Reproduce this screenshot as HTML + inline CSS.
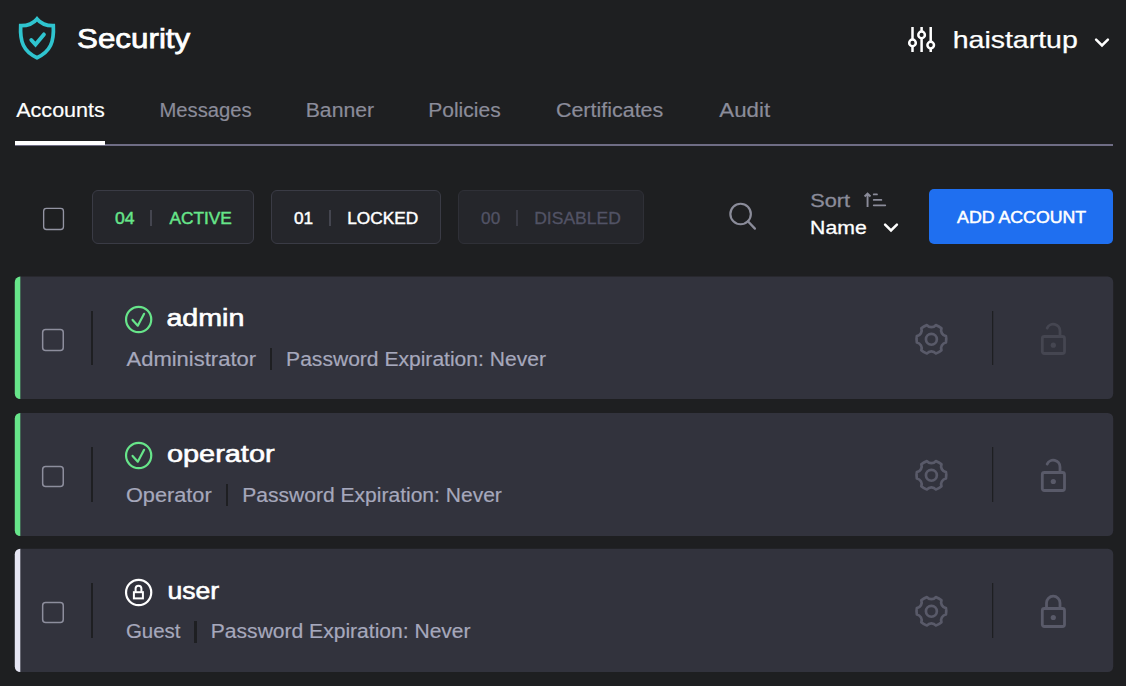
<!DOCTYPE html>
<html>
<head>
<meta charset="utf-8">
<title>Security</title>
<style>
*{box-sizing:border-box;margin:0;padding:0}
html,body{width:1126px;height:686px;overflow:hidden;background:#1e1f21}
body{font-family:"Liberation Sans",sans-serif;color:#fff;position:relative}
.t{position:absolute;white-space:nowrap;line-height:1;transform-origin:0 0}
.abs{position:absolute}
/* header */
/* tabs */
#tabline{left:15px;top:144px;width:1098px;height:2px;background:#6f6d85}
#tabsel{left:15px;top:141px;width:90px;height:4px;background:#fff}
/* toolbar */
.pill{position:absolute;top:190px;height:54px;border:1px solid #3a3b45;border-radius:6px;background:#25262b}
.psep{position:absolute;top:210px;width:1.5px;height:16px;background:#44454f}
#btn{left:929px;top:189px;width:184px;height:55px;border-radius:5px;background:#1f6ff0}
/* rows */
.vsep{position:absolute;width:2px;background:#1e1f22}
</style>
</head>
<body>

<!-- header -->
<svg class="abs" style="left:17px;top:14px" width="40" height="48" viewBox="0 0 40 48">
 <path d="M20 5 C16.500 9.300 10 11.800 3.700 11.700 C2.800 27.500 6.300 37.500 20 43.700 C33.700 37.500 37.200 27.500 36.300 11.700 C30 11.800 23.500 9.300 20 5 Z" fill="none" stroke="#2fc4cf" stroke-width="3.700" stroke-linejoin="miter"/>
 <path d="M14.300 26 L18.500 30.600 L26.900 20.400" fill="none" stroke="#2fc4cf" stroke-width="3.900" stroke-linecap="round" stroke-linejoin="miter"/>
</svg>

<svg class="abs" style="left:906px;top:25px" width="32" height="30" viewBox="0 0 32 30">
 <g fill="none" stroke="#fff" stroke-width="2.500">
  <path d="M6.500 2 V14.600 M6.500 21.200 V27"/>
  <circle cx="6.500" cy="17.900" r="3.300"/>
  <path d="M15.600 2 V6.600 M15.600 13.200 V27"/>
  <circle cx="15.600" cy="9.900" r="3.300"/>
  <path d="M24.700 2 V16.800 M24.700 23.400 V27"/>
  <circle cx="24.700" cy="20.100" r="3.300"/>
 </g>
</svg>
<svg class="abs" style="left:1092px;top:35px" width="20" height="14" viewBox="0 0 20 14">
 <path d="M4.100 4.600 L10 10.500 L15.900 4.600" fill="none" stroke="#fff" stroke-width="2.500" stroke-linecap="round"/>
</svg>

<!-- tabs -->
<div class="abs" id="tabline"></div>
<div class="abs" id="tabsel"></div>

<!-- toolbar -->
<svg class="abs" style="left:42px;top:207px" width="24" height="25"><rect x="1.650" y="1.350" width="19.800" height="21.100" rx="2.800" fill="none" stroke="#9394a3" stroke-width="1.350"/></svg>

<div class="pill" style="left:92px;width:162px"></div>
<div class="psep" style="left:150px"></div>

<div class="pill" style="left:271px;width:170px"></div>
<div class="psep" style="left:329px"></div>

<div class="pill" style="left:458px;width:186px;border-color:#2f3037"></div>
<div class="psep" style="left:516px;background:#3a3b45"></div>

<svg class="abs" style="left:726px;top:200px" width="34" height="34" viewBox="0 0 34 34">
 <circle cx="14.600" cy="14" r="10.250" fill="none" stroke="#8b8c9a" stroke-width="2.200"/>
 <path d="M21.900 21.300 L28.900 28.600" stroke="#8b8c9a" stroke-width="2.300" stroke-linecap="round"/>
</svg>

<svg class="abs" style="left:862px;top:190px" width="28" height="20" viewBox="0 0 28 20">
 <g fill="none" stroke="#8b8c9a" stroke-width="1.900">
  <path d="M5.550 17 V4.200 M2.600 6.500 L5.550 3.550 L8.500 6.500" stroke-linejoin="miter"/>
  <path d="M11.700 4.400 H15 M11.700 9.900 H19.400 M11.700 15.300 H23.300" stroke-width="1.700" stroke-linecap="round"/>
 </g>
</svg>
<svg class="abs" style="left:881px;top:220px" width="20" height="14" viewBox="0 0 20 14">
 <path d="M4.100 4.600 L10 10.500 L15.900 4.600" fill="none" stroke="#fff" stroke-width="2.500" stroke-linecap="round"/>
</svg>

<div class="abs" id="btn"></div>

<!-- ROWS -->
<svg class="abs" style="left:0;top:0" width="1126" height="686" viewBox="0 0 1126 686">
 <defs>
  <clipPath id="rc0"><rect x="14.800" y="276.6" width="1098.400" height="122.5" rx="5.500"/></clipPath>
  <clipPath id="rc1"><rect x="14.800" y="413" width="1098.400" height="123" rx="5.500"/></clipPath>
  <clipPath id="rc2"><rect x="14.800" y="548.7" width="1098.400" height="123.3" rx="5.500"/></clipPath>
 </defs>
 <g clip-path="url(#rc0)"><rect x="14" y="275.6" width="1100" height="124.5" fill="#32333d"/><rect x="14" y="275.6" width="6.300" height="124.5" fill="#67e58a"/></g>
 <g clip-path="url(#rc1)"><rect x="14" y="411.5" width="1100" height="125.5" fill="#32333d"/><rect x="14" y="411.5" width="6.300" height="125.5" fill="#67e58a"/></g>
 <g clip-path="url(#rc2)"><rect x="14" y="547.7" width="1100" height="125.3" fill="#32333d"/><rect x="14" y="547.7" width="6.300" height="125.3" fill="#e6e6f3"/></g>
</svg>

<!-- row admin -->
<svg class="abs" style="left:41px;top:328px" width="25" height="25"><rect x="1.650" y="1.450" width="20.600" height="21" rx="3" fill="none" stroke="#8d8e9d" stroke-width="1.500"/></svg>
<div class="vsep" style="left:91px;top:311px;height:54px"></div>
<svg class="abs" style="left:123px;top:304px" width="32" height="32" viewBox="0 0 32 32">
 <circle cx="15.650" cy="15.500" r="12.600" fill="none" stroke="#67e58a" stroke-width="2.200"/>
 <path d="M9.600 15.900 L14.800 21.700 L21.100 9.800" fill="none" stroke="#67e58a" stroke-width="2.200" stroke-linecap="round" stroke-linejoin="round"/>
</svg>
<div class="vsep" style="left:270px;top:348px;height:22px"></div>
<svg class="abs" style="left:911px;top:319px" width="40" height="40" viewBox="0 0 40 40">
 <g fill="none" stroke="#595a69" stroke-width="2.7">
  <circle cx="20.4" cy="20.3" r="5.450"/>
  <path d="M34.95 17.08 A14.90 14.90 0 0 1 34.95 23.52 A5.81 5.81 0 0 0 30.47 31.29 A14.90 14.90 0 0 1 24.88 34.51 A5.81 5.81 0 0 0 15.92 34.51 A14.90 14.90 0 0 1 10.33 31.29 A5.81 5.81 0 0 0 5.85 23.52 A14.90 14.90 0 0 1 5.85 17.08 A5.81 5.81 0 0 0 10.33 9.31 A14.90 14.90 0 0 1 15.92 6.09 A5.81 5.81 0 0 0 24.88 6.09 A14.90 14.90 0 0 1 30.47 9.31 A5.81 5.81 0 0 0 34.95 17.08 Z" stroke-linejoin="round"/>
 </g>
</svg>
<div class="vsep" style="left:992px;top:311px;height:54px;width:2px;background:linear-gradient(to right,#1e1f22 50%,rgba(30,31,34,0.3) 50%)"></div>
<svg class="abs" style="left:1037px;top:318px" width="34" height="40" viewBox="0 0 34 40">
 <g fill="none" stroke="#454651" stroke-width="2.800">
  <rect x="5.300" y="18.500" width="22.200" height="17" rx="2"/>
  <path d="M23 18.500 V12.950 A6.750 6.750 0 0 0 10.130 10.100" stroke-linecap="round"/>
 </g>
 <circle cx="16.300" cy="27.200" r="2.600" fill="#454651"/>
</svg>
<!-- row operator -->
<svg class="abs" style="left:41px;top:464px" width="25" height="25"><rect x="1.650" y="2.500" width="20.600" height="19.950" rx="3" fill="none" stroke="#8d8e9d" stroke-width="1.500"/></svg>
<div class="vsep" style="left:91px;top:447px;height:55px"></div>
<svg class="abs" style="left:123px;top:440px" width="32" height="32" viewBox="0 0 32 32">
 <circle cx="15.650" cy="15.500" r="12.600" fill="none" stroke="#67e58a" stroke-width="2.200"/>
 <path d="M9.600 15.900 L14.800 21.700 L21.100 9.800" fill="none" stroke="#67e58a" stroke-width="2.200" stroke-linecap="round" stroke-linejoin="round"/>
</svg>
<div class="vsep" style="left:226px;top:484px;height:22px"></div>
<svg class="abs" style="left:911px;top:455px" width="40" height="40" viewBox="0 0 40 40">
 <g fill="none" stroke="#595a69" stroke-width="2.7">
  <circle cx="20.4" cy="20.3" r="5.450"/>
  <path d="M34.95 17.08 A14.90 14.90 0 0 1 34.95 23.52 A5.81 5.81 0 0 0 30.47 31.29 A14.90 14.90 0 0 1 24.88 34.51 A5.81 5.81 0 0 0 15.92 34.51 A14.90 14.90 0 0 1 10.33 31.29 A5.81 5.81 0 0 0 5.85 23.52 A14.90 14.90 0 0 1 5.85 17.08 A5.81 5.81 0 0 0 10.33 9.31 A14.90 14.90 0 0 1 15.92 6.09 A5.81 5.81 0 0 0 24.88 6.09 A14.90 14.90 0 0 1 30.47 9.31 A5.81 5.81 0 0 0 34.95 17.08 Z" stroke-linejoin="round"/>
 </g>
</svg>
<div class="vsep" style="left:992px;top:447px;height:55px;width:2px;background:linear-gradient(to right,#1e1f22 50%,rgba(30,31,34,0.3) 50%)"></div>
<svg class="abs" style="left:1037px;top:454px" width="34" height="40" viewBox="0 0 34 40">
 <g fill="none" stroke="#595a69" stroke-width="2.800">
  <rect x="5.300" y="18.500" width="22.200" height="18" rx="2"/>
  <path d="M23 18.500 V12.950 A6.750 6.750 0 0 0 10.130 10.100" stroke-linecap="round"/>
 </g>
 <circle cx="16.300" cy="27.500" r="2.600" fill="#595a69"/>
</svg>
<!-- row user -->
<svg class="abs" style="left:41px;top:600px" width="25" height="25"><rect x="1.650" y="2.500" width="20.600" height="19.950" rx="3" fill="none" stroke="#8d8e9d" stroke-width="1.500"/></svg>
<div class="vsep" style="left:91px;top:583px;height:55px"></div>
<svg class="abs" style="left:123px;top:576px" width="32" height="32" viewBox="0 0 32 32">
 <circle cx="15.650" cy="16.500" r="12.600" fill="none" stroke="#fff" stroke-width="2.200"/>
 <rect x="10.900" y="16.200" width="9" height="6.200" fill="none" stroke="#fff" stroke-width="2"/>
 <path d="M12.600 16.200 V12.600 A2.900 2.900 0 0 1 18.400 12.600 V16.200" fill="none" stroke="#fff" stroke-width="2"/>
</svg>
<div class="vsep" style="left:194px;top:621px;height:22px;width:3px"></div>
<svg class="abs" style="left:911px;top:591px" width="40" height="40" viewBox="0 0 40 40">
 <g fill="none" stroke="#595a69" stroke-width="2.7">
  <circle cx="20.4" cy="20.3" r="5.450"/>
  <path d="M34.95 17.08 A14.90 14.90 0 0 1 34.95 23.52 A5.81 5.81 0 0 0 30.47 31.29 A14.90 14.90 0 0 1 24.88 34.51 A5.81 5.81 0 0 0 15.92 34.51 A14.90 14.90 0 0 1 10.33 31.29 A5.81 5.81 0 0 0 5.85 23.52 A14.90 14.90 0 0 1 5.85 17.08 A5.81 5.81 0 0 0 10.33 9.31 A14.90 14.90 0 0 1 15.92 6.09 A5.81 5.81 0 0 0 24.88 6.09 A14.90 14.90 0 0 1 30.47 9.31 A5.81 5.81 0 0 0 34.95 17.08 Z" stroke-linejoin="round"/>
 </g>
</svg>
<div class="vsep" style="left:992px;top:583px;height:55px;width:2px;background:linear-gradient(to right,#1e1f22 50%,rgba(30,31,34,0.3) 50%)"></div>
<svg class="abs" style="left:1037px;top:590px" width="34" height="40" viewBox="0 0 34 40">
 <g fill="none" stroke="#595a69" stroke-width="2.800">
  <rect x="5.300" y="18.500" width="22.200" height="18" rx="2"/>
  <path d="M9.500 18.500 V12.950 A6.750 6.750 0 0 1 23 12.950 V18.500" stroke-linecap="round"/>
 </g>
 <circle cx="16.300" cy="27.500" r="2.600" fill="#595a69"/>
</svg>
<div class="t" style="left:77px;top:24px;font-size:28px;color:#fff;-webkit-text-stroke:0.75px #fff;transform:translate(0.06px,0.6px) scaleX(1.1186)">Security</div>
<div class="t" style="left:952px;top:28px;font-size:24px;color:#fff;-webkit-text-stroke:0.25px #fff;transform:translate(0.72px,0.4px) scaleX(1.1864)">haistartup</div>
<div class="t" style="left:16px;top:100px;font-size:20px;color:#fff;-webkit-text-stroke:0.18px #fff;transform:translate(0.20px,0px) scaleX(1.0777)">Accounts</div>
<div class="t" style="left:159px;top:100px;font-size:20px;color:#8b8c9a;-webkit-text-stroke:0.18px #8b8c9a;transform:translate(0.38px,0px) scaleX(1.0124)">Messages</div>
<div class="t" style="left:305px;top:100px;font-size:20px;color:#8b8c9a;-webkit-text-stroke:0.18px #8b8c9a;transform:translate(0.71px,0px) scaleX(1.0598)">Banner</div>
<div class="t" style="left:428px;top:100px;font-size:20px;color:#8b8c9a;-webkit-text-stroke:0.18px #8b8c9a;transform:translate(0.22px,0px) scaleX(1.0517)">Policies</div>
<div class="t" style="left:555px;top:100px;font-size:20px;color:#8b8c9a;-webkit-text-stroke:0.18px #8b8c9a;transform:translate(0.93px,0px) scaleX(1.0731)">Certificates</div>
<div class="t" style="left:719px;top:100px;font-size:20px;color:#8b8c9a;-webkit-text-stroke:0.18px #8b8c9a;transform:translate(0.30px,0px) scaleX(1.1143)">Audit</div>
<div class="t" style="left:114px;top:210px;font-size:17px;color:#67e58a;-webkit-text-stroke:0.45px #67e58a;transform:translate(0.98px,0px) scaleX(1.0301)">04</div>
<div class="t" style="left:169px;top:210px;font-size:17px;color:#67e58a;-webkit-text-stroke:0.45px #67e58a;transform:translate(0.45px,0px) scaleX(1.0155)">ACTIVE</div>
<div class="t" style="left:293px;top:210px;font-size:17px;color:#fff;-webkit-text-stroke:0.45px #fff;transform:translate(0.89px,0px) scaleX(1.0141)">01</div>
<div class="t" style="left:347px;top:210px;font-size:17px;color:#fff;-webkit-text-stroke:0.45px #fff;transform:translate(0.23px,0px) scaleX(1.0162)">LOCKED</div>
<div class="t" style="left:481px;top:210px;font-size:17px;color:#525365;-webkit-text-stroke:0.3px #525365;transform:translate(0.09px,0px) scaleX(1.0111)">00</div>
<div class="t" style="left:534px;top:210px;font-size:17px;color:#525365;-webkit-text-stroke:0.3px #525365;transform:translate(0.21px,0px) scaleX(1.0298)">DISABLED</div>
<div class="t" style="left:810px;top:192px;font-size:18.5px;color:#8b8c9a;-webkit-text-stroke:0.3px #8b8c9a;transform:translate(0.22px,0px) scaleX(1.1759)">Sort</div>
<div class="t" style="left:810px;top:217px;font-size:19px;color:#fff;-webkit-text-stroke:0.3px #fff;transform:translate(0.12px,0.7px) scaleX(1.1175)">Name</div>
<div class="t" style="left:957px;top:209px;font-size:17px;color:#fff;-webkit-text-stroke:0.5px #fff;transform:translate(0.06px,0px) scaleX(1.0435)">ADD ACCOUNT</div>
<div class="t" style="left:166px;top:307px;font-size:23.5px;color:#fff;-webkit-text-stroke:0.6px #fff;transform:translate(0.39px,0.4px) scaleX(1.2177)">admin</div>
<div class="t" style="left:126px;top:349px;font-size:20px;color:#a6a8bc;-webkit-text-stroke:0.2px #a6a8bc;transform:translate(0.50px,0px) scaleX(1.0996)">Administrator</div>
<div class="t" style="left:286px;top:349px;font-size:20px;color:#a6a8bc;-webkit-text-stroke:0.2px #a6a8bc;transform:translate(0.12px,0px) scaleX(1.0527)">Password Expiration: Never</div>
<div class="t" style="left:166px;top:443px;font-size:23.5px;color:#fff;-webkit-text-stroke:0.6px #fff;transform:translate(0.88px,0.4px) scaleX(1.2311)">operator</div>
<div class="t" style="left:125px;top:485px;font-size:20px;color:#a6a8bc;-webkit-text-stroke:0.2px #a6a8bc;transform:translate(0.88px,0px) scaleX(1.0872)">Operator</div>
<div class="t" style="left:242px;top:485px;font-size:20px;color:#a6a8bc;-webkit-text-stroke:0.2px #a6a8bc;transform:translate(0.32px,0px) scaleX(1.0518)">Password Expiration: Never</div>
<div class="t" style="left:167px;top:579px;font-size:23.5px;color:#fff;-webkit-text-stroke:0.6px #fff;transform:translate(0.39px,1.0px) scaleX(1.1303)">user</div>
<div class="t" style="left:125px;top:621px;font-size:20px;color:#a6a8bc;-webkit-text-stroke:0.2px #a6a8bc;transform:translate(0.88px,0px) scaleX(1.0239)">Guest</div>
<div class="t" style="left:210px;top:621px;font-size:20px;color:#a6a8bc;-webkit-text-stroke:0.2px #a6a8bc;transform:translate(0.82px,0px) scaleX(1.0527)">Password Expiration: Never</div>
</body>
</html>
